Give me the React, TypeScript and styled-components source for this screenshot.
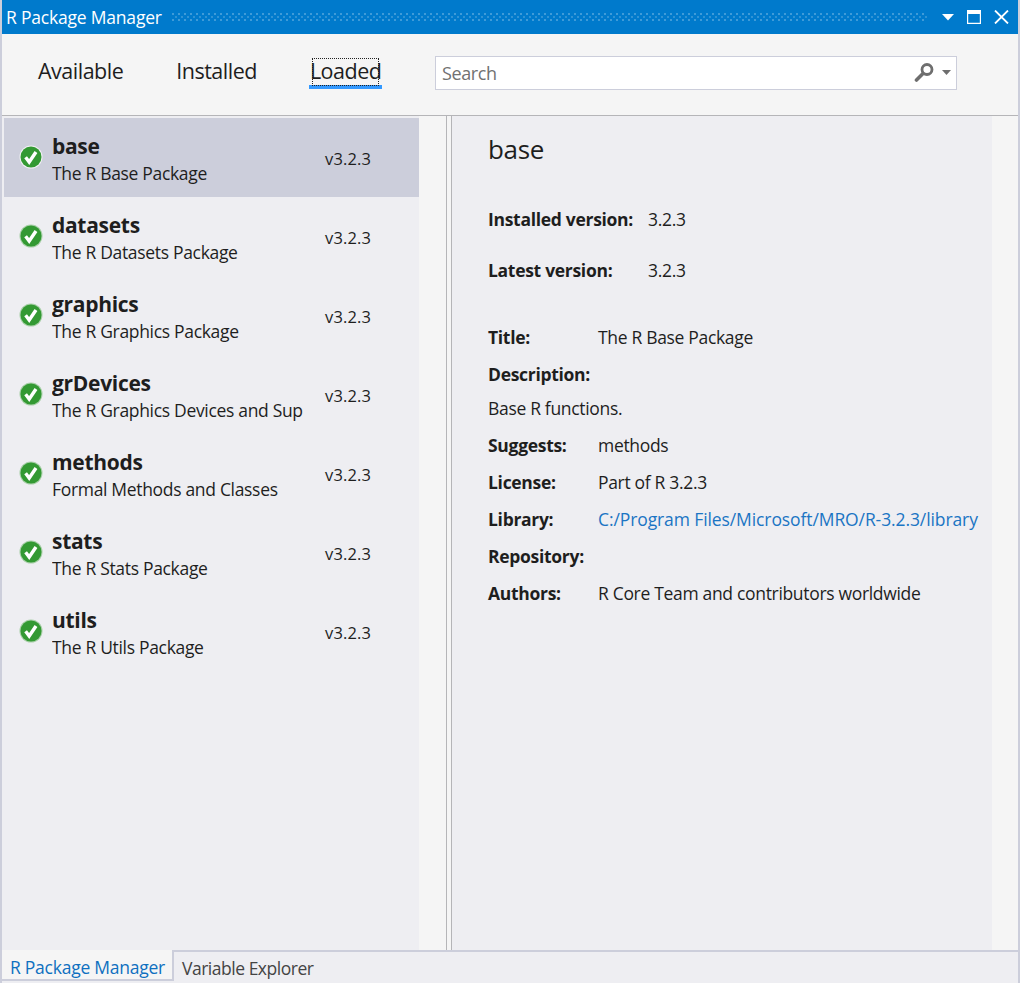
import React from "react";
import styled, { createGlobalStyle } from "styled-components";

const Global = createGlobalStyle`
  html, body { margin: 0; padding: 0; background: #eeeef2; }
  body { font-family: "Open Sans", "Noto Sans", sans-serif; color: #1e1e1e; }
  * { box-sizing: border-box; }
  svg { display: block; }
`;

const Window = styled.div`
  width: 1020px; height: 983px; display: flex; flex-direction: column; overflow: hidden;
  border-left: 2px solid #ccceDB; border-right: 2px solid #ccceDB;
`;
const TitleBar = styled.div`
  height: 34px; margin: 0 -2px; flex: none; background: #007acc; color: #fff;
  display: flex; align-items: center; padding: 0 11px 0 6px; gap: 12px;
`;
const TitleText = styled.span`font-size: 17.5px; letter-spacing: -0.2px; white-space: nowrap; line-height: 34px; width: 154px;`;
const Grip = styled.div`
  flex: 1; height: 9px;
  background-image:
    radial-gradient(circle at 1px 1px, #3f9bd8 1px, transparent 1.1px),
    radial-gradient(circle at 1px 1px, #2f92d4 1px, transparent 1.1px);
  background-size: 6px 6px;
  background-position: 0 0, 3px 3px;
`;
const TitleButtons = styled.div`display: flex; align-items: center; gap: 13px; margin-left: 2px;`;
const Toolbar = styled.div`
  height: 82px; flex: none; background: #f5f5f5; border-bottom: 1px solid #b5b5b8;
  display: flex; align-items: center; padding: 0 0 4px 36px;
`;
const Tabs = styled.div`display: flex; gap: 53px; align-items: center; width: 397px; margin-top: -4px;`;
const Tab = styled.div<{ $active?: boolean }>`
  position: relative; font-size: 21.5px; letter-spacing: -0.5px; line-height: 30px; color: #1e1e1e;
  ${(p) => p.$active && `
    &::before { content: ""; position: absolute; left: 2px; right: 2px; top: 2px; bottom: 0; border: 1px dotted #222; z-index: 1; }
    &::after { content: ""; position: absolute; left: -1px; right: -1px; bottom: -3px; height: 4px; background: #3399ff; }
  `}
`;
const Search = styled.div`
  width: 522px; height: 34px; background: #fff; border: 1px solid #ccceDB;
  display: flex; align-items: center; padding: 0 5px 0 6px;
  font-size: 18px; letter-spacing: -0.4px; color: #717171; gap: 6px;
`;
const SearchLabel = styled.span`flex: 1;`;
const Body = styled.div`
  flex: 1; min-height: 0; display: grid; grid-template-columns: 417px 27px 1px 4px 1px 540px 1fr; background: #f5f5f5;
`;
const List = styled.div`background: #eeeef2; padding: 2px 0 0 2px;`;
const Row = styled.div<{ $selected?: boolean }>`
  height: 79px; display: grid; grid-template-columns: 48px 253px 1fr; align-items: center; background: ${(p) => (p.$selected ? "#ccceDB" : "transparent")};
`;
const Check = styled.div`display: flex; justify-content: center; padding-left: 5px; padding-bottom: 1px;`;
const RowText = styled.div`overflow: hidden; white-space: nowrap; display: flex; flex-direction: column; padding-top: 2px;`;
const RowName = styled.div`font-size: 21px; font-weight: 700; letter-spacing: -0.3px; line-height: 28px;`;
const RowDesc = styled.div`font-size: 17.5px; letter-spacing: -0.32px; line-height: 26px;`;
const RowVersion = styled.div`font-size: 16.5px; letter-spacing: 0.15px; padding-left: 20px; padding-top: 2px;`;
const Line = styled.div`background: #b5b5b8;`;
const Gap = styled.div`background: #f5f5f5;`;
const Detail = styled.div`background: #eeeef2; padding: 14px 0 0 36px; font-size: 17.5px; letter-spacing: -0.32px;`;
const DetailTitle = styled.div`font-size: 26px; letter-spacing: -0.3px; line-height: 38px; margin-bottom: 38px;`;
const VersionRow = styled.div`display: grid; grid-template-columns: 160px 1fr; line-height: 26px; margin-bottom: 25px;`;
const FieldRow = styled.div`display: grid; grid-template-columns: 110px 1fr; line-height: 26px; margin-bottom: 11px; white-space: nowrap;`;
const Label = styled.span`font-weight: 700; letter-spacing: -0.3px;`;
const Plain = styled.div`line-height: 26px; margin: -3px 0 11px;`;
const Link = styled.span`color: #1b75c4; letter-spacing: -0.1px;`;
const Fields = styled.div`margin-top: 41px;`;
const Footer = styled.div`
  height: 33px; flex: none; background: #eeeef2; border-top: 2px solid #ccceDB; display: flex; margin-top: -1px;
`;
const FootTab = styled.div<{ $active?: boolean }>`
  height: 31px; margin-top: ${(p) => (p.$active ? "-2px" : "0")}; padding: ${(p) => (p.$active ? "4px" : "3px")} 8px 0 8px;
  width: ${(p) => (p.$active ? "172px" : "auto")};
  background: ${(p) => (p.$active ? "#f5f5f5" : "transparent")};
  border-right: ${(p) => (p.$active ? "2px solid #ccceDB" : "none")};
  border-bottom: ${(p) => (p.$active ? "2px solid #ccceDB" : "none")};
  color: ${(p) => (p.$active ? "#0e70c0" : "#444")};
  font-size: 17.5px; letter-spacing: ${(p) => (p.$active ? "-0.25px" : "-0.48px")}; line-height: 27px; white-space: nowrap;
`;

const CheckIcon = ({ ring }: { ring?: boolean }) => (
  <svg width="24" height="24" viewBox="0 0 24 24">
    <circle cx="12" cy="12" r="11.5" fill={ring ? "#f1f1f4" : "#a7cfa7"} />
    <circle cx="12" cy="12" r="10.5" fill="#339933" />
    <path d="M6.6 12.2 L10.2 17 L17 7" fill="none" stroke="#fff" strokeWidth="3.4" />
  </svg>
);

const packages = [
  ["base", "The R Base Package"],
  ["datasets", "The R Datasets Package"],
  ["graphics", "The R Graphics Package"],
  ["grDevices", "The R Graphics Devices and Sup"],
  ["methods", "Formal Methods and Classes"],
  ["stats", "The R Stats Package"],
  ["utils", "The R Utils Package"],
];

const fields: [string, React.ReactNode][] = [
  ["Title:", "The R Base Package"],
  ["Description:", ""],
  ["", "Base R functions."],
  ["Suggests:", "methods"],
  ["License:", "Part of R 3.2.3"],
  ["Library:", <Link key="l">C:/Program Files/Microsoft/MRO/R-3.2.3/library</Link>],
  ["Repository:", ""],
  ["Authors:", "R Core Team and contributors worldwide"],
];

export default function App() {
  return (
    <Window>
      <Global />
      <TitleBar>
        <TitleText>R Package Manager</TitleText>
        <Grip />
        <TitleButtons>
          <svg width="12" height="7" viewBox="0 0 12 7"><path d="M0 0H12L6 6.5Z" fill="#fff" /></svg>
          <svg width="14" height="14" viewBox="0 0 14 14"><path fillRule="evenodd" d="M0 0H14V14H0ZM1.2 4V12.8H12.8V4Z" fill="#fff" /></svg>
          <svg width="15" height="14" viewBox="0 0 15 14"><path d="M1 .5 14 13.5M14 .5 1 13.5" stroke="#fff" strokeWidth="1.8" fill="none" /></svg>
        </TitleButtons>
      </TitleBar>
      <Toolbar>
        <Tabs>
          <Tab>Available</Tab>
          <Tab>Installed</Tab>
          <Tab $active>Loaded</Tab>
        </Tabs>
        <Search>
          <SearchLabel>Search</SearchLabel>
          <svg width="22" height="20" viewBox="0 0 22 20">
            <circle cx="13" cy="6.5" r="5" fill="none" stroke="#6e6e6e" strokeWidth="2.8" />
            <path d="M9 10.5 2.5 17" stroke="#6e6e6e" strokeWidth="3.6" strokeLinecap="round" />
          </svg>
          <svg width="9" height="5" viewBox="0 0 9 5"><path d="M0 0H9L4.5 5Z" fill="#6e6e6e" /></svg>
        </Search>
      </Toolbar>
      <Body>
        <List>
          {packages.map(([name, desc], i) => (
            <Row key={name} $selected={i === 0}>
              <Check><CheckIcon ring={i === 0} /></Check>
              <RowText>
                <RowName>{name}</RowName>
                <RowDesc>{desc}</RowDesc>
              </RowText>
              <RowVersion>v3.2.3</RowVersion>
            </Row>
          ))}
        </List>
        <Gap />
        <Line />
        <Gap />
        <Line />
        <Detail>
          <DetailTitle>base</DetailTitle>
          <VersionRow><Label>Installed version:</Label><span>3.2.3</span></VersionRow>
          <VersionRow><Label>Latest version:</Label><span>3.2.3</span></VersionRow>
          <Fields>
            {fields.map(([k, v], i) =>
              k ? (
                <FieldRow key={i}><Label>{k}</Label><span>{v}</span></FieldRow>
              ) : (
                <Plain key={i}>{v}</Plain>
              )
            )}
          </Fields>
        </Detail>
        <Gap />
      </Body>
      <Footer>
        <FootTab $active>R Package Manager</FootTab>
        <FootTab>Variable Explorer</FootTab>
      </Footer>
    </Window>
  );
}
